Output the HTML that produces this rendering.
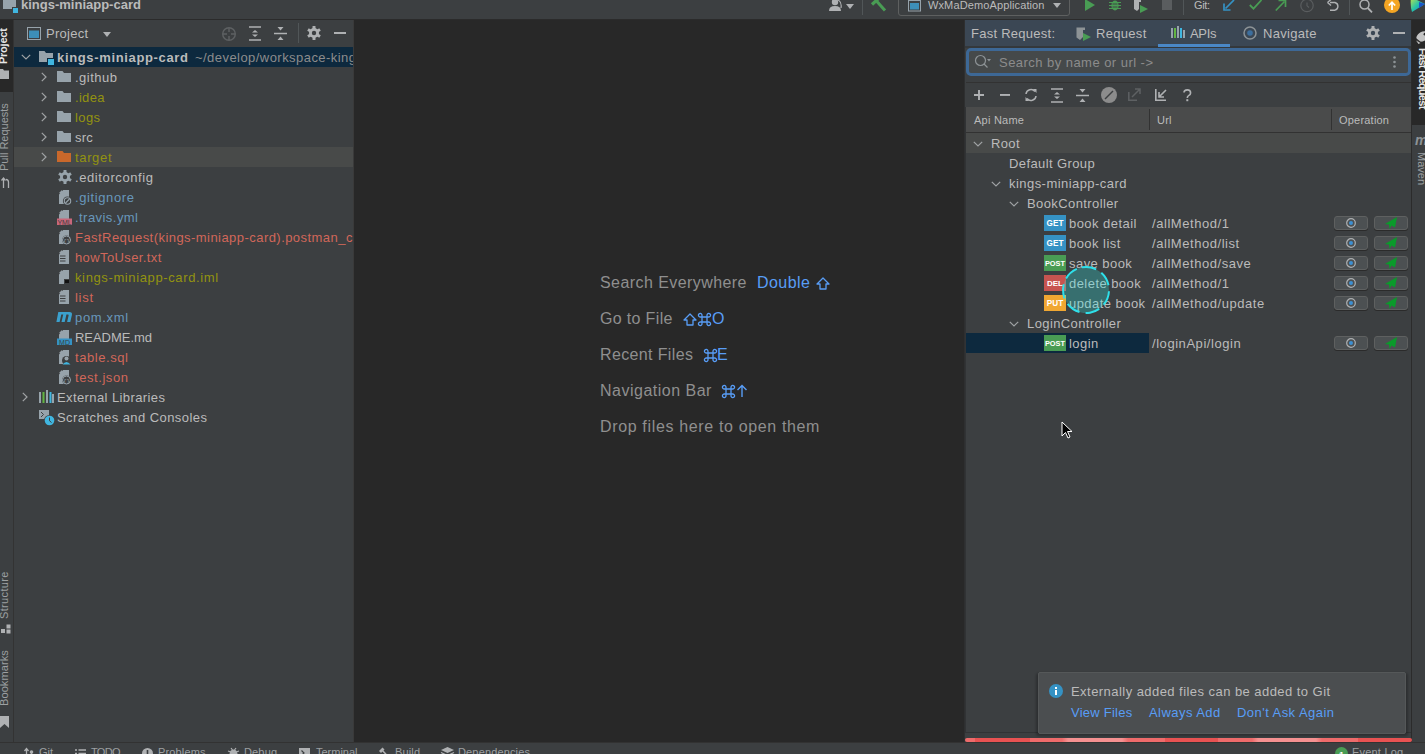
<!DOCTYPE html>
<html><head><meta charset="utf-8">
<style>
*{margin:0;padding:0;box-sizing:border-box}
html,body{width:1425px;height:754px;overflow:hidden;background:#3c3f41;font-family:"Liberation Sans",sans-serif;font-size:13px;color:#bbbbbb}
.a{position:absolute;display:block}
.t{position:absolute;white-space:nowrap;line-height:1}
</style></head><body>
<div class="a" style="left:0px;top:0px;width:1425px;height:19px;background:#3c3f41;"></div>
<div class="a" style="left:0px;top:19px;width:1425px;height:1px;background:#2b2b2b;"></div>
<div class="a" style="left:0px;top:20px;width:13px;height:722px;background:#3c3f41;"></div>
<div class="a" style="left:0px;top:20px;width:13px;height:72px;background:#282828;"></div>
<div class="a" style="left:13px;top:20px;width:1px;height:722px;background:#333333;"></div>
<div class="a" style="left:14px;top:20px;width:339px;height:722px;background:#3c3f41;"></div>
<div class="a" style="left:353px;top:20px;width:1px;height:722px;background:#3a3a3a;"></div>
<div class="a" style="left:354px;top:20px;width:610px;height:722px;background:#282828;"></div>
<div class="a" style="left:964px;top:20px;width:1px;height:722px;background:#2e2f30;"></div>
<div class="a" style="left:965px;top:20px;width:446px;height:722px;background:#3c3f41;"></div>
<div class="a" style="left:1411px;top:20px;width:1px;height:722px;background:#2b2b2b;"></div>
<div class="a" style="left:1412px;top:20px;width:13px;height:722px;background:#3c3f41;"></div>
<div class="a" style="left:1412px;top:20px;width:13px;height:105px;background:#282828;"></div>
<div class="a" style="left:0px;top:742px;width:1425px;height:12px;background:#3c3f41;"></div>
<div class="a" style="left:0px;top:742px;width:1425px;height:1px;background:#323232;"></div>
<svg class="a" style="left:3px;top:-3px;overflow:visible" width="16" height="17" viewBox="0 0 16 17" ><path d="M0 0 H6 L7.5 3 H13 V12 H0 Z" fill="#97a3ab"/><rect x="9" y="10" width="6" height="6" fill="#3c3f41"/><rect x="10" y="11" width="5" height="5" fill="#40b6e0"/></svg>
<div class="t" style="left:21px;top:-2px;font-size:13px;color:#bbbbbb;font-weight:bold;letter-spacing:0.00px;">kings-miniapp-card</div>
<svg class="a" style="left:829px;top:0px;overflow:visible" width="14" height="11" viewBox="0 0 14 11" ><circle cx="6" cy="2" r="3.2" fill="#afb1b3"/><path d="M0 11 Q0 6 6 6 Q12 6 12 11 Z" fill="#afb1b3"/><path d="M9 0 Q13 2 12 8" fill="none" stroke="#afb1b3" stroke-width="1.2"/></svg>
<svg class="a" style="left:846px;top:4px;overflow:visible" width="8" height="5" viewBox="0 0 8 5" ><path d="M0 0 H8 L4 5 Z" fill="#afb1b3"/></svg>
<div class="a" style="left:862px;top:0px;width:1px;height:15px;background:#515658;"></div>
<svg class="a" style="left:868px;top:-4px;overflow:visible" width="20" height="17" viewBox="0 0 20 17" ><path d="M8.5 5 L17 14.5" stroke="#499c54" stroke-width="3"/><path d="M4 8.5 L10.5 2.5" stroke="#499c54" stroke-width="3.2"/></svg>
<div class="a" style="left:898px;top:-5px;width:172px;height:21px;border:1px solid #5e6060;border-radius:3px"></div>
<svg class="a" style="left:908px;top:0px;overflow:visible" width="13" height="12" viewBox="0 0 13 12" ><rect x="0.5" y="0.5" width="12" height="10.5" fill="none" stroke="#97a3ab" stroke-width="1"/><rect x="2" y="3" width="9" height="6.5" fill="#3d8fb8"/></svg>
<div class="t" style="left:928px;top:0px;font-size:11px;color:#bbbbbb;font-weight:normal;letter-spacing:0.12px;">WxMaDemoApplication</div>
<svg class="a" style="left:1053px;top:3px;overflow:visible" width="8" height="5" viewBox="0 0 8 5" ><path d="M0 0 H8 L4 5 Z" fill="#afb1b3"/></svg>
<svg class="a" style="left:1085px;top:0px;overflow:visible" width="10" height="11" viewBox="0 0 10 11" ><path d="M0 -1 L10 5 L0 11 Z" fill="#499c54"/></svg>
<svg class="a" style="left:1109px;top:0px;overflow:visible" width="12" height="12" viewBox="0 0 12 12" ><ellipse cx="6" cy="5.5" rx="3.6" ry="5" fill="#499c54"/><path d="M0 2.5 H12 M0 5.5 H12 M0 8.5 H12" stroke="#499c54" stroke-width="1.2"/><path d="M3.5 4 H8.5 M3.5 7 H8.5" stroke="#3c3f41" stroke-width="0.9"/></svg>
<svg class="a" style="left:1134px;top:0px;overflow:visible" width="15" height="13" viewBox="0 0 15 13" ><path d="M0 -2 H7 V2 H5 V9 L3 11 L0 9 Z" fill="#afb1b3"/><path d="M6 5 L14 9 L6 13 Z" fill="#499c54"/></svg>
<div class="a" style="left:1162px;top:0px;width:10px;height:10px;background:#5a5d5f;"></div>
<div class="a" style="left:1183px;top:0px;width:1px;height:15px;background:#515658;"></div>
<div class="t" style="left:1194px;top:0px;font-size:11px;color:#bbbbbb;font-weight:normal;letter-spacing:-0.37px;">Git:</div>
<svg class="a" style="left:1224px;top:0px;overflow:visible" width="11" height="11" viewBox="0 0 11 11" ><path d="M10 0 L1.5 8.5" stroke="#3592c4" stroke-width="1.7"/><path d="M0 3.5 V10 H6.5" fill="none" stroke="#3592c4" stroke-width="1.7"/></svg>
<svg class="a" style="left:1249px;top:0px;overflow:visible" width="13" height="10" viewBox="0 0 13 10" ><path d="M0.8 5 L4.5 8.7 L12.5 0" fill="none" stroke="#499c54" stroke-width="1.8"/></svg>
<svg class="a" style="left:1275px;top:0px;overflow:visible" width="11" height="11" viewBox="0 0 11 11" ><path d="M0.8 10.5 L9.5 1.5" stroke="#499c54" stroke-width="1.7"/><path d="M3.5 0.5 H10.5 V7" fill="none" stroke="#499c54" stroke-width="1.7"/></svg>
<svg class="a" style="left:1300px;top:0px;overflow:visible" width="14" height="13" viewBox="0 0 14 13" ><circle cx="7" cy="5.5" r="6.2" fill="none" stroke="#5a5d5f" stroke-width="1.2"/><path d="M7 2.5 V5.8 L9 7.5" fill="none" stroke="#5a5d5f" stroke-width="1.1"/></svg>
<svg class="a" style="left:1327px;top:0px;overflow:visible" width="13" height="11" viewBox="0 0 13 11" ><path d="M3 2.5 H8 A4 4 0 0 1 8 10.2 H3" fill="none" stroke="#afb1b3" stroke-width="1.4"/><path d="M0.5 2.5 L4 -0.5 M0.5 2.5 L4 5.5" fill="none" stroke="#afb1b3" stroke-width="1.4"/></svg>
<div class="a" style="left:1349px;top:0px;width:1px;height:15px;background:#515658;"></div>
<svg class="a" style="left:1359px;top:0px;overflow:visible" width="14" height="13" viewBox="0 0 14 13" ><circle cx="5.5" cy="4.5" r="4.5" fill="none" stroke="#afb1b3" stroke-width="1.5"/><path d="M8.8 8 L13 12.3" stroke="#afb1b3" stroke-width="1.8"/></svg>
<svg class="a" style="left:1384px;top:0px;overflow:visible" width="16" height="13" viewBox="0 0 16 13" ><circle cx="8" cy="5" r="8" fill="#f4a523"/><path d="M8 10 V2.5 M4.8 5.5 L8 2.2 L11.2 5.5" fill="none" stroke="#ffffff" stroke-width="1.7"/></svg>
<svg class="a" style="left:1410px;top:0px;overflow:visible" width="15" height="12" viewBox="0 0 15 12" ><defs><linearGradient id="tb" x1="0" y1="0" x2="1" y2="1"><stop offset="0" stop-color="#c4e34a"/><stop offset="0.5" stop-color="#26c3a8"/><stop offset="1" stop-color="#1e6fd9"/></linearGradient></defs><path d="M1 -3 L15 4 L2 12 Q0 6 1 -3 Z" fill="url(#tb)"/><path d="M9 2 L15 4 L9 8 Z" fill="#1b56c8"/></svg>
<div class="t" style="left:-2px;top:64px;font-size:11px;font-weight:bold;color:#e6e6e6;transform:rotate(-90deg);transform-origin:0 0;letter-spacing:-0.25px">Project</div>
<svg class="a" style="left:0px;top:69px;overflow:visible" width="9" height="10" viewBox="0 0 9 10" ><path d="M0 0 H3 L4 1.5 H9 V10 H0 Z" fill="#afb1b3"/></svg>
<div class="t" style="left:-1px;top:171px;font-size:11px;color:#9da0a2;transform:rotate(-90deg);transform-origin:0 0;letter-spacing:0px">Pull Requests</div>
<svg class="a" style="left:1px;top:177px;overflow:visible" width="10" height="11" viewBox="0 0 10 11" ><path d="M2.5 11 V1.5 M0.5 3.5 L2.5 1 L4.5 3.5" fill="none" stroke="#afb1b3" stroke-width="1.3"/><path d="M7.5 11 V5 Q7.5 2.5 5 2.5" fill="none" stroke="#afb1b3" stroke-width="1.3"/></svg>
<div class="t" style="left:-1px;top:619px;font-size:11px;color:#9da0a2;transform:rotate(-90deg);transform-origin:0 0;letter-spacing:0.35px">Structure</div>
<svg class="a" style="left:1px;top:624px;overflow:visible" width="10" height="10" viewBox="0 0 10 10" ><rect x="0" y="5" width="4" height="4" fill="#afb1b3"/><rect x="5.5" y="0.5" width="4" height="4" fill="#afb1b3"/><rect x="5.5" y="5.5" width="4" height="4" fill="#afb1b3"/></svg>
<div class="t" style="left:-1px;top:706px;font-size:11px;color:#9da0a2;transform:rotate(-90deg);transform-origin:0 0;letter-spacing:0.1px">Bookmarks</div>
<svg class="a" style="left:0px;top:716px;overflow:visible" width="9" height="12" viewBox="0 0 9 12" ><path d="M0 0 H9 V12 L4.5 8 L0 12 Z" fill="#afb1b3"/></svg>
<svg class="a" style="left:27px;top:27px;overflow:visible" width="14" height="13" viewBox="0 0 14 13" ><rect x="0.5" y="0.5" width="13" height="12" fill="none" stroke="#97a3ab" stroke-width="1"/><rect x="2" y="3.5" width="10" height="7.5" fill="#3d8fb8"/></svg>
<div class="t" style="left:46px;top:27px;font-size:13px;color:#bbbbbb;font-weight:normal;letter-spacing:0.26px;">Project</div>
<svg class="a" style="left:103px;top:32px;overflow:visible" width="8" height="5" viewBox="0 0 8 5" ><path d="M0 0 H8 L4 5 Z" fill="#afb1b3"/></svg>
<svg class="a" style="left:221px;top:26px;overflow:visible" width="16" height="16" viewBox="0 0 16 16" ><circle cx="8" cy="8" r="6.3" fill="none" stroke="#5e6163" stroke-width="1.4"/><path d="M8 2 V6 M8 10 V14 M2 8 H6 M10 8 H14" stroke="#5e6163" stroke-width="1.4"/></svg>
<svg class="a" style="left:249px;top:26px;overflow:visible" width="12" height="15" viewBox="0 0 12 15" ><path d="M0 1 H12 M0 14 H12" stroke="#afb1b3" stroke-width="1.6"/><path d="M3 6.5 L6 4 L9 6.5 Z M3 8.5 L6 11 L9 8.5 Z" fill="#afb1b3"/></svg>
<svg class="a" style="left:274px;top:26px;overflow:visible" width="13" height="15" viewBox="0 0 13 15" ><path d="M0 7.5 H13" stroke="#afb1b3" stroke-width="1.5"/><path d="M3.5 1 L6.5 4.5 L9.5 1 Z M3.5 14 L6.5 10.5 L9.5 14 Z" fill="#afb1b3"/></svg>
<div class="a" style="left:298px;top:23px;width:1px;height:20px;background:#515658;"></div>
<svg class="a" style="left:307px;top:26px;overflow:visible" width="14" height="14" viewBox="0 0 14 14" ><g fill="#afb1b3"><circle cx="7" cy="7" r="5"/><rect x="5.5" y="0" width="3" height="14" rx="0.5"/><rect x="5.5" y="0" width="3" height="14" rx="0.5" transform="rotate(60 7 7)"/><rect x="5.5" y="0" width="3" height="14" rx="0.5" transform="rotate(120 7 7)"/></g><circle cx="7" cy="7" r="2.2" fill="#3c3f41"/></svg>
<div class="a" style="left:334px;top:32px;width:12px;height:2px;background:#afb1b3;"></div>
<div class="a" style="left:14px;top:47px;width:339px;height:20px;background:#0d293e;"></div>
<div class="a" style="left:14px;top:147px;width:339px;height:20px;background:#484a49;"></div>
<svg class="a" style="left:21px;top:54px;overflow:visible" width="10" height="6" viewBox="0 0 10 6" ><path d="M0.8 0.8 L5 5 L9.2 0.8" fill="none" stroke="#a0a3a5" stroke-width="1.2"/></svg>
<svg class="a" style="left:39px;top:51px;overflow:visible" width="16" height="15" viewBox="0 0 16 15" ><path d="M0 0 H5.5 L7 2 H14 V11 H0 Z" fill="#97a3ab"/><rect x="8" y="7" width="8" height="8" fill="#0d293e"/><rect x="9" y="8" width="6" height="6" fill="#40b6e0"/></svg>
<div class="a" style="left:14px;top:47px;width:339px;height:20px;overflow:hidden">
<div class="t" style="left:43px;top:4px;font-size:13px;color:#bbbbbb;font-weight:bold;letter-spacing:0.65px;">kings-miniapp-card</div>
<div class="t" style="left:181px;top:4px;font-size:13px;color:#8c8c8c;font-weight:normal;letter-spacing:0.45px;">~/develop/workspace-kings-miniapp</div>
</div>
<svg class="a" style="left:41px;top:72px;overflow:visible" width="6" height="10" viewBox="0 0 6 10" ><path d="M0.8 0.8 L5 5 L0.8 9.2" fill="none" stroke="#a0a3a5" stroke-width="1.2"/></svg>
<svg class="a" style="left:57px;top:71px;overflow:visible" width="14" height="11" viewBox="0 0 14 11" ><path d="M0 0 H5.5 L7 2 H14 V11 H0 Z" fill="#97a3ab"/></svg>
<div class="t" style="left:75px;top:71px;font-size:13px;color:#bbbbbb;font-weight:normal;letter-spacing:0.49px;">.github</div>
<svg class="a" style="left:41px;top:92px;overflow:visible" width="6" height="10" viewBox="0 0 6 10" ><path d="M0.8 0.8 L5 5 L0.8 9.2" fill="none" stroke="#a0a3a5" stroke-width="1.2"/></svg>
<svg class="a" style="left:57px;top:91px;overflow:visible" width="14" height="11" viewBox="0 0 14 11" ><path d="M0 0 H5.5 L7 2 H14 V11 H0 Z" fill="#97a3ab"/></svg>
<div class="t" style="left:75px;top:91px;font-size:13px;color:#939310;font-weight:normal;letter-spacing:0.30px;">.idea</div>
<svg class="a" style="left:41px;top:112px;overflow:visible" width="6" height="10" viewBox="0 0 6 10" ><path d="M0.8 0.8 L5 5 L0.8 9.2" fill="none" stroke="#a0a3a5" stroke-width="1.2"/></svg>
<svg class="a" style="left:57px;top:111px;overflow:visible" width="14" height="11" viewBox="0 0 14 11" ><path d="M0 0 H5.5 L7 2 H14 V11 H0 Z" fill="#97a3ab"/></svg>
<div class="t" style="left:75px;top:111px;font-size:13px;color:#939310;font-weight:normal;letter-spacing:0.38px;">logs</div>
<svg class="a" style="left:41px;top:132px;overflow:visible" width="6" height="10" viewBox="0 0 6 10" ><path d="M0.8 0.8 L5 5 L0.8 9.2" fill="none" stroke="#a0a3a5" stroke-width="1.2"/></svg>
<svg class="a" style="left:57px;top:131px;overflow:visible" width="14" height="11" viewBox="0 0 14 11" ><path d="M0 0 H5.5 L7 2 H14 V11 H0 Z" fill="#97a3ab"/></svg>
<div class="t" style="left:75px;top:131px;font-size:13px;color:#bbbbbb;font-weight:normal;letter-spacing:0.24px;">src</div>
<svg class="a" style="left:41px;top:152px;overflow:visible" width="6" height="10" viewBox="0 0 6 10" ><path d="M0.8 0.8 L5 5 L0.8 9.2" fill="none" stroke="#a0a3a5" stroke-width="1.2"/></svg>
<svg class="a" style="left:57px;top:151px;overflow:visible" width="14" height="11" viewBox="0 0 14 11" ><path d="M0 0 H5.5 L7 2 H14 V11 H0 Z" fill="#c9682b"/></svg>
<div class="t" style="left:75px;top:151px;font-size:13px;color:#939310;font-weight:normal;letter-spacing:0.65px;">target</div>
<svg class="a" style="left:58px;top:170px;overflow:visible" width="14" height="14" viewBox="0 0 14 14" ><g fill="#97a3ab"><circle cx="7" cy="7" r="5"/><rect x="5.5" y="0" width="3" height="14" rx="0.5"/><rect x="5.5" y="0" width="3" height="14" rx="0.5" transform="rotate(60 7 7)"/><rect x="5.5" y="0" width="3" height="14" rx="0.5" transform="rotate(120 7 7)"/></g><circle cx="7" cy="7" r="2.2" fill="#3c3f41"/></svg>
<div class="t" style="left:75px;top:171px;font-size:13px;color:#bbbbbb;font-weight:normal;letter-spacing:0.60px;">.editorconfig</div>
<svg class="a" style="left:56px;top:189px;overflow:visible" width="16" height="16" viewBox="0 0 16 16" ><path d="M7.2 1 H13 V15 H3 V5.2 Z" fill="#97a3ab"/><path d="M3 4 L6 1 V4 Z" fill="#97a3ab"/><circle cx="11.5" cy="12" r="4.6" fill="#3c3f41"/><circle cx="11.5" cy="12" r="3.2" fill="none" stroke="#97a3ab" stroke-width="1.1"/><path d="M9.5 14 L13.5 10" stroke="#97a3ab" stroke-width="1.1"/></svg>
<div class="t" style="left:75px;top:191px;font-size:13px;color:#6897bb;font-weight:normal;letter-spacing:0.61px;">.gitignore</div>
<svg class="a" style="left:56px;top:209px;overflow:visible" width="16" height="16" viewBox="0 0 16 16" ><path d="M7.2 1 H13 V15 H3 V5.2 Z" fill="#97a3ab"/><path d="M3 4 L6 1 V4 Z" fill="#97a3ab"/><rect x="1" y="9.5" width="15" height="6.5" fill="#c9677a"/><text x="8.5" y="15.6" font-size="7" font-family="Liberation Sans" fill="#3c3f41" text-anchor="middle" letter-spacing="-0.2">YML</text></svg>
<div class="t" style="left:75px;top:211px;font-size:13px;color:#6897bb;font-weight:normal;letter-spacing:0.45px;">.travis.yml</div>
<svg class="a" style="left:56px;top:229px;overflow:visible" width="16" height="16" viewBox="0 0 16 16" ><path d="M7.2 1 H13 V15 H3 V5.2 Z" fill="#97a3ab"/><path d="M3 4 L6 1 V4 Z" fill="#97a3ab"/><circle cx="10.5" cy="11" r="4.5" fill="#3c3f41"/><circle cx="10.5" cy="11" r="4" fill="none" stroke="#97a3ab" stroke-width="1"/><text x="10.5" y="13.5" font-size="6" font-family="Liberation Mono" fill="#97a3ab" text-anchor="middle">{}</text></svg>
<div class="a" style="left:75px;top:227px;width:278px;height:20px;overflow:hidden">
<div class="t" style="left:0px;top:4px;font-size:13px;color:#d1675a;font-weight:normal;letter-spacing:0.45px;">FastRequest(kings-miniapp-card).postman_collection.json</div>
</div>
<svg class="a" style="left:56px;top:249px;overflow:visible" width="16" height="16" viewBox="0 0 16 16" ><path d="M7.2 1 H13 V15 H3 V5.2 Z" fill="#97a3ab"/><path d="M3 4 L6 1 V4 Z" fill="#97a3ab"/><path d="M4 7 H9.5 M4 9.5 H9.5 M4 12 H9.5" stroke="#3c3f41" stroke-width="1"/></svg>
<div class="t" style="left:75px;top:251px;font-size:13px;color:#d1675a;font-weight:normal;letter-spacing:0.39px;">howToUser.txt</div>
<svg class="a" style="left:56px;top:269px;overflow:visible" width="16" height="16" viewBox="0 0 16 16" ><path d="M7.2 1 H13 V15 H3 V5.2 Z" fill="#97a3ab"/><path d="M3 4 L6 1 V4 Z" fill="#97a3ab"/><rect x="8" y="10" width="5" height="5" fill="#3c3f41"/><rect x="9" y="11" width="4" height="3" fill="#111"/></svg>
<div class="t" style="left:75px;top:271px;font-size:13px;color:#939310;font-weight:normal;letter-spacing:0.62px;">kings-miniapp-card.iml</div>
<svg class="a" style="left:56px;top:289px;overflow:visible" width="16" height="16" viewBox="0 0 16 16" ><path d="M7.2 1 H13 V15 H3 V5.2 Z" fill="#97a3ab"/><path d="M3 4 L6 1 V4 Z" fill="#97a3ab"/><path d="M4 7 H9.5 M4 9.5 H9.5 M4 12 H9.5" stroke="#3c3f41" stroke-width="1"/></svg>
<div class="t" style="left:75px;top:291px;font-size:13px;color:#d1675a;font-weight:normal;letter-spacing:0.70px;">list</div>
<svg class="a" style="left:56px;top:312px;overflow:visible" width="16" height="10" viewBox="0 0 16 10" ><path d="M2.3 0 H13.3 Q16.6 0 15.9 3 L14.3 10 H11.1 L12.6 3.4 Q12.9 2.4 11.9 2.4 H10.4 L8.7 10 H5.5 L7.2 2.4 H5.3 L3.6 10 H0.4 Z" fill="#3ba0cd"/></svg>
<div class="t" style="left:75px;top:311px;font-size:13px;color:#6897bb;font-weight:normal;letter-spacing:0.65px;">pom.xml</div>
<svg class="a" style="left:56px;top:329px;overflow:visible" width="16" height="16" viewBox="0 0 16 16" ><path d="M7.2 1 H13 V15 H3 V5.2 Z" fill="#97a3ab"/><path d="M3 4 L6 1 V4 Z" fill="#97a3ab"/><rect x="1" y="9.5" width="15" height="6.5" fill="#3592c4"/><text x="8.5" y="15.6" font-size="7" font-family="Liberation Sans" fill="#3c3f41" text-anchor="middle">MD</text></svg>
<div class="t" style="left:75px;top:331px;font-size:13px;color:#bbbbbb;font-weight:normal;letter-spacing:-0.04px;">README.md</div>
<svg class="a" style="left:56px;top:349px;overflow:visible" width="16" height="16" viewBox="0 0 16 16" ><path d="M7.2 1 H13 V15 H3 V5.2 Z" fill="#97a3ab"/><path d="M3 4 L6 1 V4 Z" fill="#97a3ab"/><circle cx="10.5" cy="11.5" r="4.5" fill="#3c3f41"/><circle cx="10.5" cy="9.5" r="2" fill="#97a3ab"/><path d="M6.5 15.5 Q10.5 10.5 14.5 15.5 Z" fill="#40b6e0"/></svg>
<div class="t" style="left:75px;top:351px;font-size:13px;color:#d1675a;font-weight:normal;letter-spacing:0.57px;">table.sql</div>
<svg class="a" style="left:56px;top:369px;overflow:visible" width="16" height="16" viewBox="0 0 16 16" ><path d="M7.2 1 H13 V15 H3 V5.2 Z" fill="#97a3ab"/><path d="M3 4 L6 1 V4 Z" fill="#97a3ab"/><circle cx="10.5" cy="11" r="4.5" fill="#3c3f41"/><circle cx="10.5" cy="11" r="4" fill="none" stroke="#97a3ab" stroke-width="1"/><text x="10.5" y="13.5" font-size="6" font-family="Liberation Mono" fill="#97a3ab" text-anchor="middle">{}</text></svg>
<div class="t" style="left:75px;top:371px;font-size:13px;color:#d1675a;font-weight:normal;letter-spacing:0.57px;">test.json</div>
<svg class="a" style="left:22px;top:392px;overflow:visible" width="6" height="10" viewBox="0 0 6 10" ><path d="M0.8 0.8 L5 5 L0.8 9.2" fill="none" stroke="#a0a3a5" stroke-width="1.2"/></svg>
<svg class="a" style="left:39px;top:390px;overflow:visible" width="15" height="13" viewBox="0 0 15 13" ><rect x="0" y="2" width="2" height="11" fill="#97a3ab"/><rect x="3.5" y="2" width="2" height="11" fill="#62b543"/><rect x="7" y="0" width="2" height="13" fill="#97a3ab"/><rect x="10.5" y="2" width="2" height="11" fill="#40b6e0"/><rect x="13" y="4" width="2" height="9" fill="#97a3ab"/></svg>
<div class="t" style="left:57px;top:391px;font-size:13px;color:#bbbbbb;font-weight:normal;letter-spacing:0.40px;">External Libraries</div>
<svg class="a" style="left:39px;top:410px;overflow:visible" width="16" height="16" viewBox="0 0 16 16" ><rect x="0" y="0" width="10" height="9" fill="#97a3ab"/><path d="M2 2 L4.5 4.5 L2 7" fill="none" stroke="#3c3f41" stroke-width="1"/><circle cx="10.5" cy="10.5" r="5.5" fill="#3c3f41"/><circle cx="10.5" cy="10.5" r="4.8" fill="#40b6e0"/><path d="M10.5 7.5 V10.8 L12.5 12.5" fill="none" stroke="#3c3f41" stroke-width="1"/></svg>
<div class="t" style="left:57px;top:411px;font-size:13px;color:#bbbbbb;font-weight:normal;letter-spacing:0.43px;">Scratches and Consoles</div>
<div class="t" style="left:600px;top:275px;font-size:16px;color:#8f8f8f;font-weight:normal;letter-spacing:0.43px;">Search Everywhere</div>
<div class="t" style="left:757px;top:275px;font-size:16px;color:#589df6;font-weight:normal;letter-spacing:0.46px;">Double</div>
<svg class="a" style="left:816px;top:277px;overflow:visible" width="14" height="13" viewBox="0 0 14 13" ><path d="M7 1 L13 7 H10 V12 H4 V7 H1 Z" fill="none" stroke="#589df6" stroke-width="1.3" stroke-linejoin="round"/></svg>
<div class="t" style="left:600px;top:311px;font-size:16px;color:#8f8f8f;font-weight:normal;letter-spacing:0.34px;">Go to File</div>
<svg class="a" style="left:683px;top:313px;overflow:visible" width="14" height="13" viewBox="0 0 14 13" ><path d="M7 1 L13 7 H10 V12 H4 V7 H1 Z" fill="none" stroke="#589df6" stroke-width="1.3" stroke-linejoin="round"/></svg>
<svg class="a" style="left:698px;top:313px;overflow:visible" width="13" height="12" viewBox="0 0 13 12" ><path d="M4 4 H9 V9 H4 Z M4 4 V2.5 A1.8 1.8 0 1 0 2.5 4 H4 M9 4 H10.5 A1.8 1.8 0 1 0 9 2.5 V4 M9 9 V10.5 A1.8 1.8 0 1 0 10.5 9 H9 M4 9 H2.5 A1.8 1.8 0 1 0 4 10.5 V9" fill="none" stroke="#589df6" stroke-width="1.3"/></svg>
<div class="t" style="left:712px;top:311px;font-size:16px;color:#589df6;font-weight:normal;letter-spacing:0.00px;">O</div>
<div class="t" style="left:600px;top:347px;font-size:16px;color:#8f8f8f;font-weight:normal;letter-spacing:0.37px;">Recent Files</div>
<svg class="a" style="left:704px;top:349px;overflow:visible" width="13" height="12" viewBox="0 0 13 12" ><path d="M4 4 H9 V9 H4 Z M4 4 V2.5 A1.8 1.8 0 1 0 2.5 4 H4 M9 4 H10.5 A1.8 1.8 0 1 0 9 2.5 V4 M9 9 V10.5 A1.8 1.8 0 1 0 10.5 9 H9 M4 9 H2.5 A1.8 1.8 0 1 0 4 10.5 V9" fill="none" stroke="#589df6" stroke-width="1.3"/></svg>
<div class="t" style="left:717px;top:347px;font-size:16px;color:#589df6;font-weight:normal;letter-spacing:0.00px;">E</div>
<div class="t" style="left:600px;top:383px;font-size:16px;color:#8f8f8f;font-weight:normal;letter-spacing:0.50px;">Navigation Bar</div>
<svg class="a" style="left:722px;top:385px;overflow:visible" width="13" height="12" viewBox="0 0 13 12" ><path d="M4 4 H9 V9 H4 Z M4 4 V2.5 A1.8 1.8 0 1 0 2.5 4 H4 M9 4 H10.5 A1.8 1.8 0 1 0 9 2.5 V4 M9 9 V10.5 A1.8 1.8 0 1 0 10.5 9 H9 M4 9 H2.5 A1.8 1.8 0 1 0 4 10.5 V9" fill="none" stroke="#589df6" stroke-width="1.3"/></svg>
<svg class="a" style="left:736px;top:384px;overflow:visible" width="12" height="14" viewBox="0 0 12 14" ><path d="M6 13 V1.5 M1.5 6 L6 1.5 L10.5 6" fill="none" stroke="#589df6" stroke-width="1.4"/></svg>
<div class="t" style="left:600px;top:419px;font-size:16px;color:#8f8f8f;font-weight:normal;letter-spacing:0.65px;">Drop files here to open them</div>
<div class="a" style="left:965px;top:20px;width:446px;height:26px;background:#3b4754;"></div>
<div class="a" style="left:965px;top:46px;width:446px;height:2px;background:#34383b;"></div>
<div class="t" style="left:971px;top:27px;font-size:13px;color:#bbbbbb;font-weight:normal;letter-spacing:0.26px;">Fast Request:</div>
<svg class="a" style="left:1076px;top:27px;overflow:visible" width="16" height="15" viewBox="0 0 16 15" ><path d="M0.5 0.5 H9 V3 H7 V10 L4 13 L0.5 10.5 Z" fill="#8d9396"/><path d="M7 6 L15 10 L7 14 Z" fill="#499c54"/></svg>
<div class="t" style="left:1096px;top:27px;font-size:13px;color:#bbbbbb;font-weight:normal;letter-spacing:0.31px;">Request</div>
<svg class="a" style="left:1171px;top:26px;overflow:visible" width="14" height="12" viewBox="0 0 14 12" ><rect x="0" y="2" width="2" height="10" fill="#97a3ab"/><rect x="3" y="2" width="2" height="10" fill="#62b543"/><rect x="6" y="0" width="2" height="12" fill="#97a3ab"/><rect x="9" y="2" width="2" height="10" fill="#40b6e0"/><rect x="12" y="4" width="2" height="8" fill="#97a3ab"/></svg>
<div class="t" style="left:1190px;top:27px;font-size:13px;color:#bbbbbb;font-weight:normal;letter-spacing:-0.32px;">APIs</div>
<div class="a" style="left:1158px;top:44px;width:72px;height:3px;background:#4a88c7;"></div>
<svg class="a" style="left:1243px;top:26px;overflow:visible" width="14" height="14" viewBox="0 0 14 14" ><circle cx="7" cy="7" r="6" fill="none" stroke="#8d9396" stroke-width="1.5"/><circle cx="7" cy="7" r="2.8" fill="#3d6f9e"/></svg>
<div class="t" style="left:1263px;top:27px;font-size:13px;color:#bbbbbb;font-weight:normal;letter-spacing:0.31px;">Navigate</div>
<svg class="a" style="left:1366px;top:26px;overflow:visible" width="14" height="14" viewBox="0 0 14 14" ><g fill="#afb1b3"><circle cx="7" cy="7" r="5"/><rect x="5.5" y="0" width="3" height="14" rx="0.5"/><rect x="5.5" y="0" width="3" height="14" rx="0.5" transform="rotate(60 7 7)"/><rect x="5.5" y="0" width="3" height="14" rx="0.5" transform="rotate(120 7 7)"/></g><circle cx="7" cy="7" r="2.2" fill="#3b4754"/></svg>
<div class="a" style="left:1393px;top:32px;width:12px;height:2px;background:#afb1b3;"></div>
<div class="a" style="left:966px;top:48px;width:445px;height:28px;border:3px solid #3d6896;border-radius:5px;background:#45494a"></div>
<svg class="a" style="left:974px;top:54px;overflow:visible" width="18" height="16" viewBox="0 0 18 16" ><circle cx="6.5" cy="6.5" r="5" fill="none" stroke="#8d9396" stroke-width="1.2"/><path d="M10 10 L13.5 13.5" stroke="#8d9396" stroke-width="1.3"/><path d="M13 5 H17 L15 7.5 Z" fill="#8d9396"/></svg>
<div class="t" style="left:999px;top:56px;font-size:13px;color:#8c8c8c;font-weight:normal;letter-spacing:0.46px;">Search by name or url -&gt;</div>
<svg class="a" style="left:1393px;top:56px;overflow:visible" width="3" height="12" viewBox="0 0 3 12" ><circle cx="1.5" cy="1.5" r="1.3" fill="#8d9396"/><circle cx="1.5" cy="6" r="1.3" fill="#8d9396"/><circle cx="1.5" cy="10.5" r="1.3" fill="#8d9396"/></svg>
<div class="a" style="left:966px;top:82px;width:445px;height:1px;background:#323232;"></div>
<svg class="a" style="left:974px;top:90px;overflow:visible" width="10" height="10" viewBox="0 0 10 10" ><path d="M5 0 V10 M0 5 H10" stroke="#afb1b3" stroke-width="1.9"/></svg>
<svg class="a" style="left:1000px;top:94px;overflow:visible" width="10" height="2" viewBox="0 0 10 2" ><rect width="10" height="1.9" fill="#afb1b3"/></svg>
<svg class="a" style="left:1024px;top:88px;overflow:visible" width="14" height="14" viewBox="0 0 14 14" ><path d="M2 6 A5 5 0 0 1 11 3.5 M12 8 A5 5 0 0 1 3 10.5" fill="none" stroke="#afb1b3" stroke-width="1.5"/><path d="M9 1 L12.5 1 L12.5 5 Z M5 13 L1.5 13 L1.5 9 Z" fill="#afb1b3"/></svg>
<svg class="a" style="left:1051px;top:88px;overflow:visible" width="12" height="15" viewBox="0 0 12 15" ><path d="M0 1 H12 M0 14 H12" stroke="#afb1b3" stroke-width="1.6"/><path d="M3 6.5 L6 4 L9 6.5 Z M3 8.5 L6 11 L9 8.5 Z" fill="#afb1b3"/></svg>
<svg class="a" style="left:1076px;top:88px;overflow:visible" width="13" height="15" viewBox="0 0 13 15" ><path d="M0 7.5 H13" stroke="#afb1b3" stroke-width="1.5"/><path d="M3.5 1 L6.5 4.5 L9.5 1 Z M3.5 14 L6.5 10.5 L9.5 14 Z" fill="#afb1b3"/></svg>
<svg class="a" style="left:1101px;top:87px;overflow:visible" width="16" height="16" viewBox="0 0 16 16" ><circle cx="8" cy="8" r="8" fill="#8c8c8c"/><path d="M4 12 L12 4" stroke="#3c3f41" stroke-width="1.4"/></svg>
<svg class="a" style="left:1128px;top:88px;overflow:visible" width="13" height="13" viewBox="0 0 13 13" ><path d="M0.8 4 V12.2 H9" fill="none" stroke="#5e6163" stroke-width="1.5"/><path d="M4 9 L12 1 M7 1 H12 V6" fill="none" stroke="#5e6163" stroke-width="1.5"/></svg>
<svg class="a" style="left:1155px;top:88px;overflow:visible" width="12" height="13" viewBox="0 0 12 13" ><path d="M0.8 1 V12.2 H11" fill="none" stroke="#afb1b3" stroke-width="1.6"/><path d="M4 9 L11 2 M4 4 V9 H9" fill="none" stroke="#afb1b3" stroke-width="1.6"/></svg>
<svg class="a" style="left:1183px;top:89px;overflow:visible" width="9" height="13" viewBox="0 0 9 13" ><path d="M1 3.6 Q1 0.9 4.3 0.9 Q7.6 0.9 7.6 3.9 Q7.6 5.6 5.6 6.6 Q4.3 7.3 4.3 8.9" fill="none" stroke="#afb1b3" stroke-width="1.6"/><rect x="3.3" y="10.2" width="2" height="2" fill="#afb1b3"/></svg>
<div class="a" style="left:966px;top:107px;width:445px;height:25px;background:#4a4b4b;"></div>
<div class="a" style="left:966px;top:132px;width:445px;height:1px;background:#323232;"></div>
<div class="a" style="left:1149px;top:109px;width:1px;height:21px;background:#323232;"></div>
<div class="a" style="left:1331px;top:109px;width:1px;height:21px;background:#323232;"></div>
<div class="t" style="left:974px;top:115px;font-size:11px;color:#bbbbbb;font-weight:normal;letter-spacing:0.24px;">Api Name</div>
<div class="t" style="left:1157px;top:115px;font-size:11px;color:#bbbbbb;font-weight:normal;letter-spacing:0.20px;">Url</div>
<div class="t" style="left:1339px;top:115px;font-size:11px;color:#bbbbbb;font-weight:normal;letter-spacing:0.21px;">Operation</div>
<div class="a" style="left:966px;top:133px;width:445px;height:20px;background:#484a49;"></div>
<svg class="a" style="left:973px;top:141px;overflow:visible" width="10" height="6" viewBox="0 0 10 6" ><path d="M0.8 0.8 L5 5 L9.2 0.8" fill="none" stroke="#a0a3a5" stroke-width="1.2"/></svg>
<div class="t" style="left:991px;top:137px;font-size:13px;color:#bbbbbb;font-weight:normal;letter-spacing:0.35px;">Root</div>
<div class="t" style="left:1009px;top:157px;font-size:13px;color:#bbbbbb;font-weight:normal;letter-spacing:0.40px;">Default Group</div>
<svg class="a" style="left:991px;top:181px;overflow:visible" width="10" height="6" viewBox="0 0 10 6" ><path d="M0.8 0.8 L5 5 L9.2 0.8" fill="none" stroke="#a0a3a5" stroke-width="1.2"/></svg>
<div class="t" style="left:1009px;top:177px;font-size:13px;color:#bbbbbb;font-weight:normal;letter-spacing:0.45px;">kings-miniapp-card</div>
<svg class="a" style="left:1009px;top:201px;overflow:visible" width="10" height="6" viewBox="0 0 10 6" ><path d="M0.8 0.8 L5 5 L9.2 0.8" fill="none" stroke="#a0a3a5" stroke-width="1.2"/></svg>
<div class="t" style="left:1027px;top:197px;font-size:13px;color:#bbbbbb;font-weight:normal;letter-spacing:0.40px;">BookController</div>
<div class="a" style="left:966px;top:333px;width:183px;height:20px;background:#0d293e;"></div>
<div class="a" style="left:1044px;top:215px;width:22px;height:16px;background:#3592c4;color:#fff;font-size:8.2px;font-weight:bold;line-height:17px;text-align:center;letter-spacing:0px;overflow:hidden">GET</div>
<div class="t" style="left:1069px;top:217px;font-size:13px;color:#bbbbbb;font-weight:normal;letter-spacing:0.45px;">book detail</div>
<div class="t" style="left:1152px;top:217px;font-size:13px;color:#bbbbbb;font-weight:normal;letter-spacing:0.55px;">/allMethod/1</div>
<div class="a" style="left:1334px;top:216px;width:34px;height:14px;background:#4c5052;border:1px solid #5e6060;border-radius:3px;box-shadow:0 1px 0 #2b2b2b"></div>
<div class="a" style="left:1374px;top:216px;width:34px;height:14px;background:#4c5052;border:1px solid #5e6060;border-radius:3px;box-shadow:0 1px 0 #2b2b2b"></div>
<svg class="a" style="left:1346px;top:218px;overflow:visible" width="10" height="10" viewBox="0 0 10 10" ><circle cx="5" cy="5" r="4.3" fill="none" stroke="#afb1b3" stroke-width="1.2"/><circle cx="5" cy="5" r="2" fill="#3d8fd1"/></svg>
<svg class="a" style="left:1385px;top:217px;overflow:visible" width="12" height="12" viewBox="0 0 12 12" ><path d="M12 0 L0 7 L4 7.5 L4.5 12 L6.5 8.5 L10 10.5 Z" fill="#0a9a2a"/></svg>
<div class="a" style="left:1044px;top:235px;width:22px;height:16px;background:#3592c4;color:#fff;font-size:8.2px;font-weight:bold;line-height:17px;text-align:center;letter-spacing:0px;overflow:hidden">GET</div>
<div class="t" style="left:1069px;top:237px;font-size:13px;color:#bbbbbb;font-weight:normal;letter-spacing:0.45px;">book list</div>
<div class="t" style="left:1152px;top:237px;font-size:13px;color:#bbbbbb;font-weight:normal;letter-spacing:0.55px;">/allMethod/list</div>
<div class="a" style="left:1334px;top:236px;width:34px;height:14px;background:#4c5052;border:1px solid #5e6060;border-radius:3px;box-shadow:0 1px 0 #2b2b2b"></div>
<div class="a" style="left:1374px;top:236px;width:34px;height:14px;background:#4c5052;border:1px solid #5e6060;border-radius:3px;box-shadow:0 1px 0 #2b2b2b"></div>
<svg class="a" style="left:1346px;top:238px;overflow:visible" width="10" height="10" viewBox="0 0 10 10" ><circle cx="5" cy="5" r="4.3" fill="none" stroke="#afb1b3" stroke-width="1.2"/><circle cx="5" cy="5" r="2" fill="#3d8fd1"/></svg>
<svg class="a" style="left:1385px;top:237px;overflow:visible" width="12" height="12" viewBox="0 0 12 12" ><path d="M12 0 L0 7 L4 7.5 L4.5 12 L6.5 8.5 L10 10.5 Z" fill="#0a9a2a"/></svg>
<div class="a" style="left:1044px;top:255px;width:22px;height:16px;background:#499c54;color:#fff;font-size:7.4px;font-weight:bold;line-height:17px;text-align:center;letter-spacing:0px;overflow:hidden">POST</div>
<div class="t" style="left:1069px;top:257px;font-size:13px;color:#bbbbbb;font-weight:normal;letter-spacing:0.45px;">save book</div>
<div class="t" style="left:1152px;top:257px;font-size:13px;color:#bbbbbb;font-weight:normal;letter-spacing:0.55px;">/allMethod/save</div>
<div class="a" style="left:1334px;top:256px;width:34px;height:14px;background:#4c5052;border:1px solid #5e6060;border-radius:3px;box-shadow:0 1px 0 #2b2b2b"></div>
<div class="a" style="left:1374px;top:256px;width:34px;height:14px;background:#4c5052;border:1px solid #5e6060;border-radius:3px;box-shadow:0 1px 0 #2b2b2b"></div>
<svg class="a" style="left:1346px;top:258px;overflow:visible" width="10" height="10" viewBox="0 0 10 10" ><circle cx="5" cy="5" r="4.3" fill="none" stroke="#afb1b3" stroke-width="1.2"/><circle cx="5" cy="5" r="2" fill="#3d8fd1"/></svg>
<svg class="a" style="left:1385px;top:257px;overflow:visible" width="12" height="12" viewBox="0 0 12 12" ><path d="M12 0 L0 7 L4 7.5 L4.5 12 L6.5 8.5 L10 10.5 Z" fill="#0a9a2a"/></svg>
<div class="a" style="left:1044px;top:275px;width:22px;height:16px;background:#c75450;color:#fff;font-size:8px;font-weight:bold;line-height:17px;text-align:center;letter-spacing:0px;overflow:hidden">DEL</div>
<div class="t" style="left:1069px;top:277px;font-size:13px;color:#bbbbbb;font-weight:normal;letter-spacing:0.45px;">delete book</div>
<div class="t" style="left:1152px;top:277px;font-size:13px;color:#bbbbbb;font-weight:normal;letter-spacing:0.55px;">/allMethod/1</div>
<div class="a" style="left:1334px;top:276px;width:34px;height:14px;background:#4c5052;border:1px solid #5e6060;border-radius:3px;box-shadow:0 1px 0 #2b2b2b"></div>
<div class="a" style="left:1374px;top:276px;width:34px;height:14px;background:#4c5052;border:1px solid #5e6060;border-radius:3px;box-shadow:0 1px 0 #2b2b2b"></div>
<svg class="a" style="left:1346px;top:278px;overflow:visible" width="10" height="10" viewBox="0 0 10 10" ><circle cx="5" cy="5" r="4.3" fill="none" stroke="#afb1b3" stroke-width="1.2"/><circle cx="5" cy="5" r="2" fill="#3d8fd1"/></svg>
<svg class="a" style="left:1385px;top:277px;overflow:visible" width="12" height="12" viewBox="0 0 12 12" ><path d="M12 0 L0 7 L4 7.5 L4.5 12 L6.5 8.5 L10 10.5 Z" fill="#0a9a2a"/></svg>
<div class="a" style="left:1044px;top:295px;width:22px;height:16px;background:#f0a732;color:#fff;font-size:8.2px;font-weight:bold;line-height:17px;text-align:center;letter-spacing:0px;overflow:hidden">PUT</div>
<div class="t" style="left:1069px;top:297px;font-size:13px;color:#bbbbbb;font-weight:normal;letter-spacing:0.45px;">update book</div>
<div class="t" style="left:1152px;top:297px;font-size:13px;color:#bbbbbb;font-weight:normal;letter-spacing:0.55px;">/allMethod/update</div>
<div class="a" style="left:1334px;top:296px;width:34px;height:14px;background:#4c5052;border:1px solid #5e6060;border-radius:3px;box-shadow:0 1px 0 #2b2b2b"></div>
<div class="a" style="left:1374px;top:296px;width:34px;height:14px;background:#4c5052;border:1px solid #5e6060;border-radius:3px;box-shadow:0 1px 0 #2b2b2b"></div>
<svg class="a" style="left:1346px;top:298px;overflow:visible" width="10" height="10" viewBox="0 0 10 10" ><circle cx="5" cy="5" r="4.3" fill="none" stroke="#afb1b3" stroke-width="1.2"/><circle cx="5" cy="5" r="2" fill="#3d8fd1"/></svg>
<svg class="a" style="left:1385px;top:297px;overflow:visible" width="12" height="12" viewBox="0 0 12 12" ><path d="M12 0 L0 7 L4 7.5 L4.5 12 L6.5 8.5 L10 10.5 Z" fill="#0a9a2a"/></svg>
<svg class="a" style="left:1009px;top:321px;overflow:visible" width="10" height="6" viewBox="0 0 10 6" ><path d="M0.8 0.8 L5 5 L9.2 0.8" fill="none" stroke="#a0a3a5" stroke-width="1.2"/></svg>
<div class="t" style="left:1027px;top:317px;font-size:13px;color:#bbbbbb;font-weight:normal;letter-spacing:0.40px;">LoginController</div>
<div class="a" style="left:1044px;top:335px;width:22px;height:16px;background:#499c54;color:#fff;font-size:7.4px;font-weight:bold;line-height:17px;text-align:center;letter-spacing:0px;overflow:hidden">POST</div>
<div class="t" style="left:1069px;top:337px;font-size:13px;color:#bbbbbb;font-weight:normal;letter-spacing:0.45px;">login</div>
<div class="t" style="left:1152px;top:337px;font-size:13px;color:#bbbbbb;font-weight:normal;letter-spacing:0.55px;">/loginApi/login</div>
<div class="a" style="left:1334px;top:336px;width:34px;height:14px;background:#4c5052;border:1px solid #5e6060;border-radius:3px;box-shadow:0 1px 0 #2b2b2b"></div>
<div class="a" style="left:1374px;top:336px;width:34px;height:14px;background:#4c5052;border:1px solid #5e6060;border-radius:3px;box-shadow:0 1px 0 #2b2b2b"></div>
<svg class="a" style="left:1346px;top:338px;overflow:visible" width="10" height="10" viewBox="0 0 10 10" ><circle cx="5" cy="5" r="4.3" fill="none" stroke="#afb1b3" stroke-width="1.2"/><circle cx="5" cy="5" r="2" fill="#3d8fd1"/></svg>
<svg class="a" style="left:1385px;top:337px;overflow:visible" width="12" height="12" viewBox="0 0 12 12" ><path d="M12 0 L0 7 L4 7.5 L4.5 12 L6.5 8.5 L10 10.5 Z" fill="#0a9a2a"/></svg>
<svg class="a" style="left:1062px;top:266px;overflow:visible" width="48" height="48" viewBox="0 0 48 48" ><circle cx="24" cy="24" r="23" fill="rgba(40,255,250,0.25)" stroke="#2ee0ea" stroke-width="2" stroke-dasharray="14.5 6.1" transform="rotate(-100 24 24)"/></svg>
<svg class="a" style="left:1061px;top:421px;overflow:visible" width="12" height="19" viewBox="0 0 12 19" ><path d="M1 1 V15 L4.5 11.5 L7 17 L9 16 L6.5 10.5 H11 Z" fill="#000" stroke="#fff" stroke-width="1"/></svg>
<div class="a" style="left:966px;top:732px;width:445px;height:1px;background:#313335;"></div>
<div class="a" style="left:965px;top:107px;width:1px;height:626px;background:#313335;"></div>
<div class="a" style="left:1036px;top:673px;width:372px;height:63px;background:rgba(0,0,0,0.25);border-radius:3px;filter:blur(1px)"></div>
<div class="a" style="left:1038px;top:672px;width:368px;height:62px;background:#4b4e50;border:1px solid #555859;border-radius:2px"></div>
<svg class="a" style="left:1049px;top:684px;overflow:visible" width="14" height="14" viewBox="0 0 14 14" ><circle cx="7" cy="7" r="7" fill="#3592c4"/><rect x="6" y="3" width="2" height="2" fill="#fff"/><rect x="6" y="6" width="2" height="5" fill="#fff"/></svg>
<div class="t" style="left:1071px;top:685px;font-size:13px;color:#bbbbbb;font-weight:normal;letter-spacing:0.45px;">Externally added files can be added to Git</div>
<div class="t" style="left:1071px;top:706px;font-size:13px;color:#589df6;font-weight:normal;letter-spacing:0.24px;">View Files</div>
<div class="t" style="left:1149px;top:706px;font-size:13px;color:#589df6;font-weight:normal;letter-spacing:0.45px;">Always Add</div>
<div class="t" style="left:1237px;top:706px;font-size:13px;color:#589df6;font-weight:normal;letter-spacing:0.45px;">Don&#39;t Ask Again</div>
<div class="a" style="left:965px;top:738px;width:447px;height:4px;border-radius:2px;background:linear-gradient(90deg,#ee6b6b 0px,#ee6b6b 10px,#e85252 10px,#e85252 65px,#ee6b6b 65px,#ee6b6b 97px,#f59191 103px,#f59191 157px,#ee6b6b 163px,#ee6b6b 200px,#e85252 200px,#e85252 253px,#ee6b6b 253px,#ee6b6b 287px,#f59191 293px,#f59191 351px,#ee6b6b 357px,#ee6b6b 393px,#e85252 393px,#e85252 447px)"></div>
<svg class="a" style="left:1414px;top:29px;overflow:visible" width="14" height="16" viewBox="0 0 14 16" ><ellipse cx="8.5" cy="7.5" rx="6.8" ry="4.6" transform="rotate(-32 8.5 7.5)" fill="#c4c4c4"/><circle cx="11" cy="5.2" r="1.4" fill="#282828"/><path d="M1.5 9.5 L6.5 13.5" stroke="#282828" stroke-width="1.3"/><path d="M2 11.5 L4.5 15 L6.5 14 Z" fill="#c4c4c4"/></svg>
<div class="t" style="left:1428px;top:48px;font-size:11px;font-weight:bold;color:#e6e6e6;transform:rotate(90deg);transform-origin:0 0;letter-spacing:-0.7px">Fast Request</div>
<div class="t" style="left:1415px;top:133px;font-size:14px;color:#8d9396;font-weight:bold;font-style:italic;line-height:1">m</div>
<div class="t" style="left:1427px;top:152px;font-size:11px;color:#9da0a2;transform:rotate(90deg);transform-origin:0 0;letter-spacing:0px">Maven</div>
<svg class="a" style="left:24px;top:748px;overflow:visible" width="10" height="10" viewBox="0 0 10 10" ><path d="M2.5 10 V1 M0.5 3 L2.5 0.5 L4.5 3 M7.5 10 V3" fill="none" stroke="#afb1b3" stroke-width="1.3"/><circle cx="7.5" cy="4" r="1.8" fill="#afb1b3"/></svg>
<div class="t" style="left:39px;top:747px;font-size:11px;color:#9da0a2;font-weight:normal;letter-spacing:-0.03px;">Git</div>
<svg class="a" style="left:75px;top:749px;overflow:visible" width="11" height="8" viewBox="0 0 11 8" ><path d="M0 1 H2 M0 4.5 H2 M0 8 H2 M3.5 1 H11 M3.5 4.5 H11 M3.5 8 H11" stroke="#afb1b3" stroke-width="1.4"/></svg>
<div class="t" style="left:91px;top:747px;font-size:11px;color:#9da0a2;font-weight:normal;letter-spacing:-0.69px;">TODO</div>
<svg class="a" style="left:142px;top:748px;overflow:visible" width="11" height="11" viewBox="0 0 11 11" ><circle cx="5.5" cy="5.5" r="5.5" fill="#afb1b3"/><rect x="4.7" y="2" width="1.6" height="4.5" fill="#3c3f41"/></svg>
<div class="t" style="left:158px;top:747px;font-size:11px;color:#9da0a2;font-weight:normal;letter-spacing:0.15px;">Problems</div>
<svg class="a" style="left:228px;top:747px;overflow:visible" width="11" height="11" viewBox="0 0 11 11" ><ellipse cx="5.5" cy="7" rx="4" ry="4.5" fill="#afb1b3"/><path d="M0 4 L3 5 M11 4 L8 5 M3 1 L4.5 3 M8 1 L6.5 3" stroke="#afb1b3" stroke-width="1.2"/></svg>
<div class="t" style="left:244px;top:747px;font-size:11px;color:#9da0a2;font-weight:normal;letter-spacing:0.15px;">Debug</div>
<svg class="a" style="left:299px;top:748px;overflow:visible" width="11" height="10" viewBox="0 0 11 10" ><rect x="0" y="0" width="11" height="10" fill="#afb1b3"/><path d="M2.5 2.5 L5 5 L2.5 7.5" fill="none" stroke="#3c3f41" stroke-width="1.2"/></svg>
<div class="t" style="left:316px;top:747px;font-size:11px;color:#9da0a2;font-weight:normal;letter-spacing:-0.01px;">Terminal</div>
<svg class="a" style="left:378px;top:747px;overflow:visible" width="10" height="10" viewBox="0 0 10 10" ><path d="M1 4 L4.5 0.5 L6.5 2.5 L3 6 Z" fill="#afb1b3"/><path d="M4 3 L10 9.5" stroke="#afb1b3" stroke-width="1.5"/></svg>
<div class="t" style="left:395px;top:747px;font-size:11px;color:#9da0a2;font-weight:normal;letter-spacing:0.14px;">Build</div>
<svg class="a" style="left:441px;top:747px;overflow:visible" width="13" height="10" viewBox="0 0 13 10" ><path d="M6.5 0 L13 3 L6.5 6 L0 3 Z" fill="#afb1b3"/><path d="M0 5.5 L6.5 8.5 L13 5.5" fill="none" stroke="#afb1b3" stroke-width="1.3"/></svg>
<div class="t" style="left:458px;top:747px;font-size:11px;color:#9da0a2;font-weight:normal;letter-spacing:0.15px;">Dependencies</div>
<svg class="a" style="left:1335px;top:747px;overflow:visible" width="13" height="13" viewBox="0 0 13 13" ><circle cx="6.5" cy="6.5" r="6.5" fill="#499c54"/><text x="6.5" y="10.5" font-size="9" font-family="Liberation Sans" font-weight="bold" fill="#fff" text-anchor="middle">1</text></svg>
<div class="t" style="left:1352px;top:747px;font-size:11px;color:#9da0a2;font-weight:normal;letter-spacing:0.20px;">Event Log</div>
</body></html>
